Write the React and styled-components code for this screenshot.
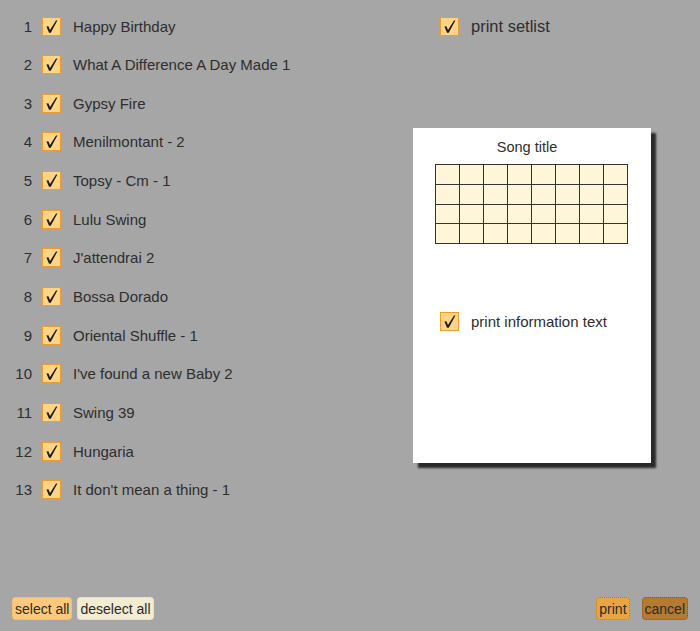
import React from "react"
import styled, { createGlobalStyle } from "styled-components"

const GlobalStyle = createGlobalStyle`
    html, body {
        margin: 0;
        padding: 0;
        background: #a6a6a6;
    }
    body {
        font-family: "Liberation Sans", Arial, sans-serif;
        color: #2e2e2e;
    }
`

const songs = [
    "Happy Birthday",
    "What A Difference A Day Made 1",
    "Gypsy Fire",
    "Menilmontant - 2",
    "Topsy - Cm - 1",
    "Lulu Swing",
    "J'attendrai 2",
    "Bossa Dorado",
    "Oriental Shuffle - 1",
    "I've found a new Baby 2",
    "Swing 39",
    "Hungaria",
    "It don't mean a thing - 1",
]

const Page = styled.div`
    width: 700px;
    height: 631px;
    display: flex;
    flex-direction: column;
    overflow: hidden;
`

const Main = styled.div`
    flex: 1;
    display: flex;
`

const SongList = styled.ul`
    list-style: none;
    margin: 0;
    padding: 16px 0 0 0;
    width: 413px;
    display: flex;
    flex-direction: column;
    gap: 18.67px;
`

const SongRow = styled.li`
    height: 20px;
    display: flex;
    align-items: center;
    font-size: 15px;
`

const Num = styled.span`
    width: 32px;
    text-align: right;
    margin-right: 10px;
`

const Box = styled.span`
    box-sizing: border-box;
    width: 19px;
    height: 19px;
    flex-shrink: 0;
    background: #ffd484;
    border: 1px solid #eb9c34;
    display: flex;
    align-items: center;
    justify-content: center;
    margin-right: 12px;
`

const Label = styled.span`
    font-size: ${p => p.$size || 15}px;
    white-space: nowrap;
`

const Side = styled.div`
    display: flex;
    flex-direction: column;
`

const OptionRow = styled.div`
    margin-top: 16px;
    height: 20px;
    display: flex;
    align-items: center;
    padding-left: 27px;
`

const Sheet = styled.div`
    margin-top: 92px;
    width: 238px;
    height: 335px;
    box-sizing: border-box;
    background: #ffffff;
    box-shadow: 5px 5px 2px #2a2a2a;
    display: flex;
    flex-direction: column;
    align-items: center;
    padding-top: 10px;
`

const SheetTitle = styled.div`
    font-size: 14.5px;
    height: 18px;
    line-height: 18px;
    margin-bottom: 8px;
    margin-right: 10px;
`

const Grid = styled.div`
    display: grid;
    grid-template-columns: repeat(8, 24px);
    grid-template-rows: repeat(4, 19.75px);
    border: 1px solid #333;
    border-right: none;
    border-bottom: none;
    background: #fff5d8;
    margin-right: 2px;
`

const Cell = styled.div`
    border-right: 1px solid #333;
    border-bottom: 1px solid #333;
    box-sizing: border-box;
`

const SheetOption = styled.div`
    align-self: stretch;
    margin-top: 67px;
    padding-left: 27px;
    height: 20px;
    display: flex;
    align-items: center;
`

const Footer = styled.div`
    display: flex;
    align-items: center;
    padding: 0 12px 11px 12px;
    gap: 5px;
`

const Button = styled.button`
    font-family: "Liberation Sans", Arial, sans-serif;
    font-size: 14px;
    color: #2a2a2a;
    height: 23px;
    padding: 0 2px;
    margin-left: ${p => p.$push || 0}px;
    border: 1px dotted ${p => p.$edge};
    border-radius: 4px;
    background: ${p => p.$bg};
    cursor: pointer;
`

const Spacer = styled.div`
    flex: 1;
`

const Check = () => (
    <svg width="15" height="15" viewBox="0 0 15 15">
        <path
            d="M2.4 7.6 L5 13.8 L6.8 13.8 L13.4 1.4 L12 1.4 L6 11 L4.4 7.2 Z"
            fill="#1c1c1c"
        />
    </svg>
)

const App = () => {
    return (
        <Page>
            <GlobalStyle />
            <Main>
                <SongList>
                    {songs.map((s, i) => (
                        <SongRow key={i}>
                            <Num>{i + 1}</Num>
                            <Box><Check /></Box>
                            <Label>{s}</Label>
                        </SongRow>
                    ))}
                </SongList>
                <Side>
                    <OptionRow>
                        <Box><Check /></Box>
                        <Label $size={16.5}>print setlist</Label>
                    </OptionRow>
                    <Sheet>
                        <SheetTitle>Song title</SheetTitle>
                        <Grid>
                            {Array.from({ length: 32 }).map((_, i) => (
                                <Cell key={i} />
                            ))}
                        </Grid>
                        <SheetOption>
                            <Box><Check /></Box>
                            <Label>print information text</Label>
                        </SheetOption>
                    </Sheet>
                </Side>
            </Main>
            <Footer>
                <Button $bg="#ffc979" $edge="#f1b35c">select all</Button>
                <Button $bg="#f3ebd2" $edge="#e1d6b4">deselect all</Button>
                <Spacer />
                <Button $bg="#e9a540" $edge="#b97d28">print</Button>
                <Button $bg="#b47b2e" $edge="#8a5a1e" $push={7}>cancel</Button>
            </Footer>
        </Page>
    )
}

export default App
